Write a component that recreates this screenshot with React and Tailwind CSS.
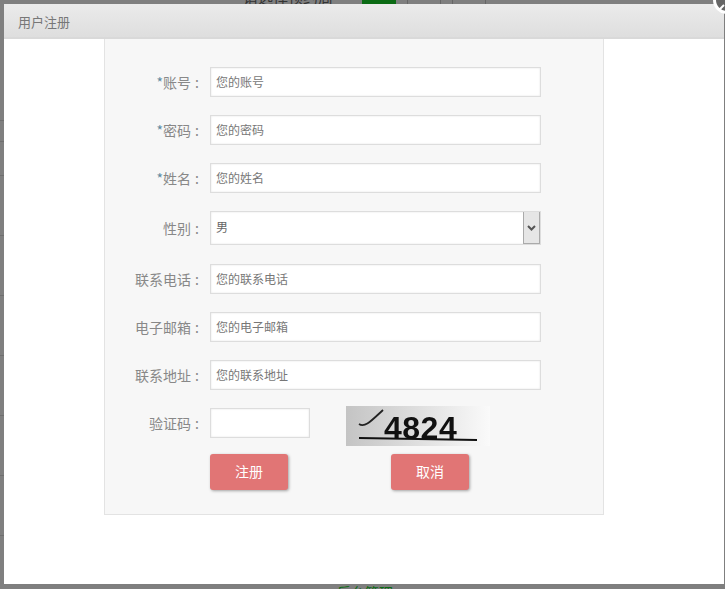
import React from 'react';

const fields = [
  { label: '账号', required: true, placeholder: '您的账号', top: 'mt-0' },
  { label: '密码', required: true, placeholder: '您的密码', top: 'mt-[18px]' },
  { label: '姓名', required: true, placeholder: '您的姓名', top: 'mt-[18px]' },
];

const moreFields = [
  { label: '联系电话', placeholder: '您的联系电话', top: 'mt-[19px]' },
  { label: '电子邮箱', placeholder: '您的电子邮箱', top: 'mt-[18px]' },
  { label: '联系地址', placeholder: '您的联系地址', top: 'mt-[18px]' },
];

const pageLines = [120, 141, 175, 235, 295, 355, 415, 475, 535];

const Label = ({ required, children }) => (
  <label className="w-[94px] shrink-0 text-right text-sm text-[#888888]">
    {required && <span className="text-[#5f8aa0]">*</span>}
    {children}
    <span className="ml-[4px]">:</span>
  </label>
);

const Row = ({ field }) => (
  <div className={`flex items-center ${field.top}`}>
    <Label required={field.required}>{field.label}</Label>
    <input
      className="ml-[11px] h-[30px] w-[331px] border border-[#dddddd] bg-white pb-0.5 pl-[5px] text-xs text-[#666666] shadow-[inset_0_0_2px_rgba(0,0,0,0.12)] placeholder:text-[#777777] outline-none"
      placeholder={field.placeholder}
    />
  </div>
);

export default function App() {
  return (
    <div className="relative h-[589px] w-[725px] overflow-hidden bg-[#7f7f7f] font-['Noto_Sans_CJK_SC',sans-serif]">
      {/* page behind the overlay */}
      {pageLines.map((y) => (
        <div key={y} className="absolute left-0 h-px w-1 bg-[#6f6f6f]" style={{ top: y }} />
      ))}
      <div className="absolute left-[243px] top-[-11px] text-[15px] leading-4 text-[#333333]">请选择预约周</div>
      <div className="absolute left-[362px] top-0 h-1 w-[34px] bg-[#0b6b14]" />
      <div className="absolute left-[407px] top-0 h-1 w-px bg-[#666666]" />
      <div className="absolute left-[440px] top-0 h-1 w-px bg-[#666666]" />
      <div className="absolute left-[452px] top-0 h-1 w-px bg-[#666666]" />
      <div className="absolute left-[485px] top-0 h-1 w-px bg-[#666666]" />
      <div className="absolute left-[337px] top-[582px] text-sm leading-5 text-[#0b6b14]">后台管理</div>

      {/* dialog */}
      <div className="absolute left-1 top-1 flex h-[580px] w-[720px] flex-col bg-white">
        <div className="flex h-[35px] shrink-0 items-center border-b-2 border-[#d9d9d9] bg-gradient-to-b from-[#ebebeb] to-[#dedede] pl-3.5 pt-0.5 text-[13px] text-[#777777]">
          用户注册
        </div>
        <div className="ml-[100px] h-[476px] w-[500px] border border-t-0 border-[#e3e3e3] bg-[#f7f7f7] pt-[28px]">
          {fields.map((f) => (
            <Row key={f.label} field={f} />
          ))}

          <div className="mt-[18px] flex items-center">
            <Label>性别</Label>
            <div className="ml-[11px] flex h-[34px] w-[331px] items-center justify-between border border-[#dddddd] bg-white pl-[5px] text-xs text-[#666666] shadow-[inset_0_0_2px_rgba(0,0,0,0.12)]">
              <span className="pb-0.5">男</span>
              <span className="flex h-full w-[17px] items-center justify-center border-x border-b border-x-[#aaaaaa] border-b-[#aaaaaa] bg-[#e6e6e6]">
                <svg width="9" height="6" viewBox="0 0 9 6">
                  <path d="M1 1l3.5 3.5L8 1" fill="none" stroke="#555555" strokeWidth="2" />
                </svg>
              </span>
            </div>
          </div>

          {moreFields.map((f) => (
            <Row key={f.label} field={f} />
          ))}

          <div className="mt-[18px] flex items-start">
            <div className="flex h-[30px] items-center">
              <Label>验证码</Label>
              <input className="ml-[11px] h-[30px] w-[100px] border border-[#dddddd] bg-white shadow-[inset_0_0_2px_rgba(0,0,0,0.12)] outline-none" />
            </div>
            <div className="relative ml-9 -mt-[2px] h-10 w-[144px] overflow-hidden bg-gradient-to-r from-[#c4c4c4] to-[#fafafa]">
              <span className="absolute left-[38px] top-[6px] font-['Liberation_Sans',sans-serif] text-[32px] font-bold leading-8 tracking-[0.5px] text-[#111111] blur-[0.7px]">
                4824
              </span>
              <svg className="absolute left-0 top-0" width="144" height="40" viewBox="0 0 144 40">
                <path d="M13 18c6 4 12-3 24-14" fill="none" stroke="#222222" strokeWidth="1.8" />
                <path d="M13 32l118 2" fill="none" stroke="#111111" strokeWidth="2" />
              </svg>
            </div>
          </div>

          <div className="ml-[105px] mt-2 flex gap-[103px]">
            <button className="h-9 w-[78px] rounded-[3px] bg-[#e17575] pb-0.5 text-sm text-white shadow-[1px_1px_3px_rgba(0,0,0,0.35)]">
              注册
            </button>
            <button className="h-9 w-[78px] rounded-[3px] bg-[#e17575] pb-0.5 text-sm text-white shadow-[1px_1px_3px_rgba(0,0,0,0.35)]">
              取消
            </button>
          </div>
        </div>
      </div>

      {/* close button, mostly cut off by the window */}
      <div className="absolute left-[713px] top-[-14px] h-7 w-7 rounded-full border-[3px] border-white bg-[#666666]">
        <svg className="absolute left-0 top-0" width="22" height="22" viewBox="0 0 22 22">
          <path d="M3 21l5-5" fill="none" stroke="#ffffff" strokeWidth="2" />
        </svg>
      </div>
    </div>
  );
}
